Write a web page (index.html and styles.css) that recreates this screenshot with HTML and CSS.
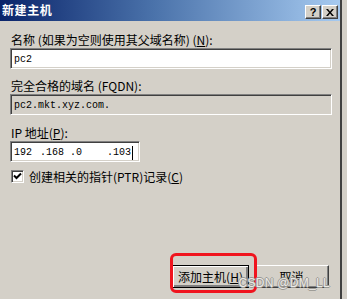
FILE: index.html
```html
<!DOCTYPE html>
<html lang="zh">
<head>
<meta charset="utf-8">
<title>新建主机</title>
<link rel="stylesheet" href="styles.css">
</head>
<body>
<div class="screen">
  <div class="dialog">
    <div class="titlebar">
      <span class="title">新建主机</span>
      <div class="tb-buttons">
        <span class="tb-btn help">?</span>
        <span class="tb-btn close">
          <svg width="8" height="7" viewBox="0 0 8 7"><path d="M0 0h2l2 2.5L6 0h2L5 3.5 8 7H6L4 4.5 2 7H0l3-3.5z" fill="#000"/></svg>
        </span>
      </div>
    </div>
    <div class="content">
      <div class="lbl">名称 (如果为空则使用其父域名称) (<u>N</u>):</div>
      <div class="field"><span class="mono">pc2</span></div>
      <div class="lbl gap">完全合格的域名 (FQDN):</div>
      <div class="field readonly"><span class="mono">pc2.mkt.xyz.com.</span></div>
      <div class="lbl gap2">IP 地址(<u>P</u>):</div>
      <div class="field ip">
        <span class="mono seg s1">192</span>
        <span class="mono seg s2">.168</span>
        <span class="mono seg s3">.0</span>
        <span class="mono seg s4">.103</span><span class="caret"></span>
      </div>
      <div class="check-row">
        <span class="checkbox">
          <svg width="9" height="9" viewBox="0 0 9 9"><path d="M1 3.5l2.5 2.5L8 1.5" fill="none" stroke="#000" stroke-width="2"/></svg>
        </span>
        <span>创建相关的指针(PTR)记录(<u>C</u>)</span>
      </div>
      <div class="buttons">
        <button class="btn default">添加主机(<u>H</u>)</button>
        <button class="btn">取消</button>
        <span class="highlight"></span>
        <span class="watermark">CSDN @DM_LL</span>
      </div>
    </div>
  </div>
  <div class="outside"></div>
</div>
</body>
</html>
```

FILE: styles.css
```css
html, body {
  margin: 0;
  padding: 0;
}

body {
  width: 347px;
  height: 299px;
  overflow: hidden;
  background: #d4d0c8;
  font-family: "Noto Sans CJK SC", "Liberation Sans", sans-serif;
  font-size: 12px;
  color: #000;
}

.screen {
  display: flex;
  height: 299px;
}

.dialog {
  width: 340px;
  height: 299px;
  background: #d4d0c8;
  border-right: 2px solid #404040;
  display: flex;
  flex-direction: column;
}

.outside {
  flex: 1;
  background: #d4d0c8;
}

.titlebar {
  height: 21px;
  background: linear-gradient(to right, #0a246a 0%, #4a72aa 45%, #a6caf0 100%);
  display: flex;
  align-items: center;
  justify-content: space-between;
  padding: 0 2px 0 2px;
}

.title {
  color: #fff;
  font-weight: bold;
  font-size: 12px;
  letter-spacing: 0.6px;
  line-height: 14px;
  margin-top: -1px;
}

.tb-buttons {
  display: flex;
  gap: 1px;
  margin-top: 3px;
}

.tb-btn {
  width: 14px;
  height: 12px;
  background: #d4d0c8;
  border: 1px solid;
  border-color: #fff #404040 #404040 #fff;
  box-shadow: inset -1px -1px #808080;
  display: flex;
  align-items: center;
  justify-content: center;
}

.tb-btn.help {
  font-family: "Liberation Sans", sans-serif;
  font-weight: bold;
  font-size: 11px;
  line-height: 12px;
}

.content {
  flex: 1;
  display: flex;
  flex-direction: column;
  padding: 12px 11px 11px 10px;
  position: relative;
}

.lbl {
  line-height: 14px;
  height: 14px;
  padding-left: 1px;
  white-space: nowrap;
}

.lbl.gap {
  margin-top: 10px;
}

.lbl.gap2 {
  margin-top: 11px;
}

u {
  text-decoration: underline;
  text-underline-offset: 1px;
}

.field {
  margin-top: 1px;
  height: 17px;
  width: 317px;
  background: #fff;
  border: 1px solid;
  border-color: #808080 #fff #fff #808080;
  box-shadow: inset 1px 1px #404040, inset -1px -1px #d4d0c8;
  padding: 2px 0 0 3px;
  display: flex;
  align-items: center;
}

.field.readonly {
  background: #d4d0c8;
}

.mono {
  font-family: "Liberation Mono", "DejaVu Sans Mono", monospace;
  font-size: 10px;
  line-height: 14px;
}

.field.ip {
  width: 125px;
}

.seg {
  display: inline-block;
  white-space: pre;
}

.s1 { width: 26px; }
.s2 { width: 30px; }
.s3 { width: 37px; }
.s4 { width: auto; }

.caret {
  width: 1px;
  height: 14px;
  background: #000;
  margin-left: 1px;
}

.check-row {
  margin-top: 7px;
  height: 14px;
  display: flex;
  align-items: center;
  gap: 5px;
  padding-left: 1px;
  white-space: nowrap;
}

.checkbox {
  width: 11px;
  height: 11px;
  background: #fff;
  border: 1px solid;
  border-color: #808080 #fff #fff #808080;
  box-shadow: inset 1px 1px #404040, inset -1px -1px #d4d0c8;
  display: flex;
  align-items: center;
  justify-content: center;
}

.buttons {
  margin-top: auto;
  display: flex;
  justify-content: flex-end;
  gap: 5px;
  position: relative;
}

.btn {
  width: 75px;
  height: 23px;
  margin: 0;
  padding: 0;
  background: #d4d0c8;
  border: 1px solid;
  border-color: #fff #404040 #404040 #fff;
  box-shadow: inset -1px -1px #808080;
  font-family: "Noto Sans CJK SC", "Liberation Sans", sans-serif;
  font-size: 12px;
  line-height: 14px;
  color: #000;
}

.btn.default {
  border: 1px solid #000;
  box-shadow: inset 1px 1px #fff, inset -2px -2px #808080;
  width: 77px;
}

.highlight {
  position: absolute;
  left: 160px;
  top: -12px;
  width: 81px;
  height: 34px;
  border: 3px solid #f0141e;
  border-radius: 6px;
}

.watermark {
  position: absolute;
  right: -1px;
  top: 12px;
  font-family: "Liberation Sans", sans-serif;
  font-size: 12px;
  line-height: 12px;
  letter-spacing: 0.3px;
  color: #ecebe8;
  text-shadow: 1px 0 0 #9a9893, -1px 0 0 #9a9893, 0 1px 0 #9a9893, 0 -1px 0 #9a9893;
  white-space: nowrap;
}
```
